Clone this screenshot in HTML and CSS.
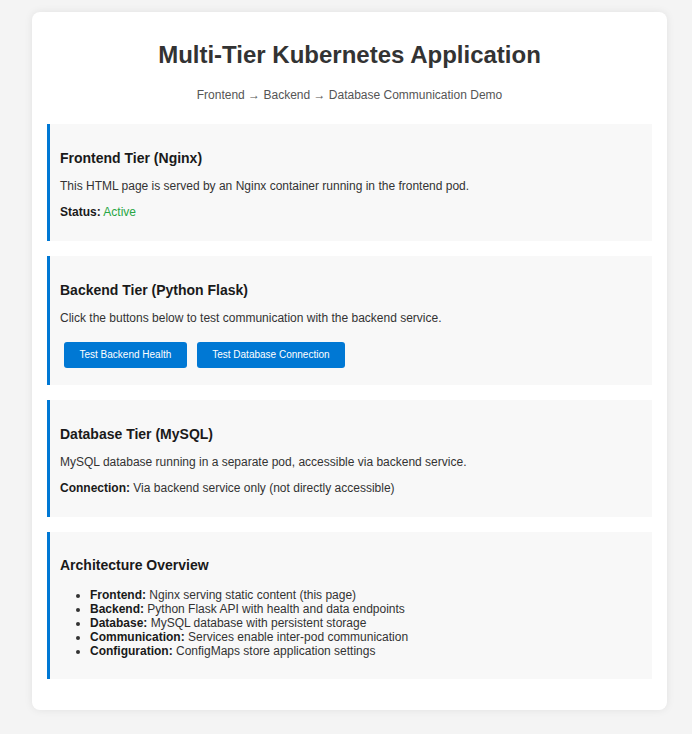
FILE: index.html
```html
<!DOCTYPE html>
<html lang="en">
<head>
<meta charset="utf-8">
<title>Multi-Tier Kubernetes Application</title>
<link rel="stylesheet" href="styles.css">
</head>
<body>
<div class="container">
  <h1 class="title">Multi-Tier Kubernetes Application</h1>
  <p class="subtitle">Frontend → Backend → Database Communication Demo</p>

  <div class="tiers">
    <section class="tier">
      <h3 class="tier-title">Frontend Tier (Nginx)</h3>
      <p class="tier-text">This HTML page is served by an Nginx container running in the frontend pod.</p>
      <p class="tier-text"><strong>Status:</strong> <span class="status-active">Active</span></p>
    </section>

    <section class="tier tier-with-actions">
      <h3 class="tier-title">Backend Tier (Python Flask)</h3>
      <p class="tier-text">Click the buttons below to test communication with the backend service.</p>
      <div class="actions">
        <button class="btn" type="button">Test Backend Health</button>
        <button class="btn" type="button">Test Database Connection</button>
      </div>
    </section>

    <section class="tier">
      <h3 class="tier-title">Database Tier (MySQL)</h3>
      <p class="tier-text">MySQL database running in a separate pod, accessible via backend service.</p>
      <p class="tier-text"><strong>Connection:</strong> Via backend service only (not directly accessible)</p>
    </section>

    <section class="tier tier-list">
      <h3 class="tier-title">Architecture Overview</h3>
      <ul class="arch-list">
        <li><strong>Frontend:</strong> Nginx serving static content (this page)</li>
        <li><strong>Backend:</strong> Python Flask API with health and data endpoints</li>
        <li><strong>Database:</strong> MySQL database with persistent storage</li>
        <li><strong>Communication:</strong> Services enable inter-pod communication</li>
        <li><strong>Configuration:</strong> ConfigMaps store application settings</li>
      </ul>
    </section>
  </div>
</div>
</body>
</html>
```

FILE: styles.css
```css
html, body {
  background: #f4f4f4;
}

body {
  margin: 0;
  padding: 12px 25px 25px 32px;
  font-family: "Liberation Sans", Arial, sans-serif;
  color: #333;
}

.container {
  background: #ffffff;
  border-radius: 8px;
  box-shadow: 0 0 8px rgba(0, 0, 0, 0.08);
  padding: 15px 15px 31px;
}

.title {
  margin: 14px 0 0;
  font-size: 24px;
  line-height: 28px;
  font-weight: bold;
  text-align: center;
  color: #333;
}

.subtitle {
  margin: 19px 0 22px;
  font-size: 12px;
  line-height: 14px;
  text-align: center;
  color: #555;
}

.tiers {
  display: flex;
  flex-direction: column;
  gap: 15px;
}

.tier {
  background: #f8f8f8;
  border-left: 3px solid #0078d4;
  padding: 26px 15px 22px 10px;
}

.tier-with-actions {
  padding-bottom: 17px;
}

.tier-list {
  padding-top: 25px;
  padding-bottom: 21px;
}

.tier-title {
  margin: 0 0 12px;
  font-size: 14px;
  line-height: 17px;
  font-weight: bold;
  color: #1a1a1a;
}

.tier-text {
  margin: 0 0 12px;
  font-size: 12px;
  line-height: 14px;
  color: #333;
}

.tier-text:last-child {
  margin-bottom: 0;
}

.tier-text strong {
  color: #1a1a1a;
}

.status-active {
  color: #28a745;
}

.actions {
  display: flex;
  gap: 10px;
  padding: 0 4px;
  margin-top: 17px;
}

.btn {
  background: #0078d4;
  color: #ffffff;
  border: none;
  border-radius: 3px;
  padding: 7px 15.5px;
  font-family: "Liberation Sans", Arial, sans-serif;
  font-size: 10px;
  line-height: 12px;
  cursor: pointer;
}

.arch-list {
  margin: 14px 0 0;
  padding-left: 30px;
  font-size: 12px;
  line-height: 14px;
  color: #333;
}

.arch-list strong {
  color: #1a1a1a;
}
```
